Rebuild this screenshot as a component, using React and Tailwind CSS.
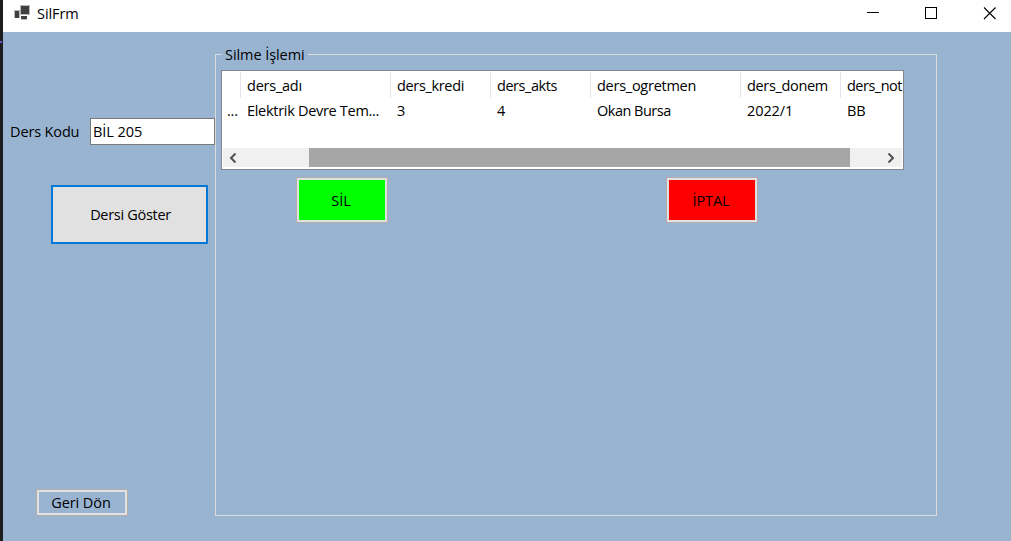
const columns = [
  { title: "", value: "...", box: "w-[18px] pl-1", valueFit: "tracking-[-0.2px]" },
  { title: "ders_adı", value: "Elektrik Devre Tem...", box: "w-[150px] pl-1.5", titleFit: "tracking-[-0.24px]", valueFit: "tracking-[-0.3px]" },
  { title: "ders_kredi", value: "3", box: "w-[100px] pl-1.5", titleFit: "tracking-[-0.34px]" },
  { title: "ders_akts", value: "4", box: "w-[100px] pl-1.5", titleFit: "tracking-[-0.45px]" },
  { title: "ders_ogretmen", value: "Okan Bursa", box: "w-[150px] pl-1.5", titleFit: "tracking-[-0.26px]", valueFit: "tracking-[-0.5px]" },
  { title: "ders_donem", value: "2022/1", box: "w-[100px] pl-1.5", titleFit: "tracking-[-0.34px]", valueFit: "tracking-[-0.1px]" },
  { title: "ders_not", value: "BB", box: "w-[61px] pl-1.5", titleFit: "tracking-[-0.5px]" },
];

function TitleBar() {
  return (
    <header className="flex h-8 shrink-0 items-start bg-white">
      <svg className="mt-[5px] ml-[11px] h-[15px] w-4" viewBox="0 0 16 15" shapeRendering="crispEdges">
        <path d="M0 5h6v8H0zM6 0h10v10H6zM7 11h6v4H7z" fill="#b8b8b8" />
        <path d="M1 6h4v7H1zM7 1h8v8H7zM7 11h6v3H7z" fill="#404040" />
      </svg>
      <span className="mt-1 ml-[7px]">SilFrm</span>
      <svg className="mt-[7px] ml-auto h-[13px] w-[131px] shrink-0" viewBox="0 0 131 13" fill="none" stroke="#000">
        <path d="M0 5.5h12M58.500.5h11v11h-11z" shapeRendering="crispEdges" />
        <path d="M117 .5l11.500 11.500M128.500.5L117 12" strokeWidth="1.1" />
      </svg>
      <span className="w-[13px]" />
    </header>
  );
}

function LessonList() {
  return (
    <div className="ml-[5px] flex h-[100px] w-[683px] flex-col border border-[#828790] bg-white p-px">
      <div className="flex h-[26px]">
        {columns.map((c) => (
          <div key={c.title} className={`${c.box} ${c.titleFit || ""} shrink-0 border-r border-[#e5e5e5] leading-[27px] last:border-r-0`}>{c.title}</div>
        ))}
      </div>
      <div className="flex h-[50px]">
        {columns.map((c) => (
          <div key={c.title} className={`${c.box} ${c.valueFit || ""} shrink-0 leading-[25px]`}>{c.value}</div>
        ))}
      </div>
      <div className="flex h-[19px] items-center bg-[#f0f0f0]">
        <svg className="ml-1.5 h-2.5 w-2" viewBox="0 0 8 10" fill="none" stroke="#505050" strokeWidth="2"><path d="M6.500.5L2 5l4.500 4.500" /></svg>
        <div className="ml-[72px] h-full w-[541px] bg-[#a6a6a6]" />
        <svg className="ml-[37px] h-2.5 w-2" viewBox="0 0 8 10" fill="none" stroke="#505050" strokeWidth="2"><path d="M1.500.5L6 5l-4.500 4.500" /></svg>
      </div>
    </div>
  );
}

export default function App() {
  return (
    <div className="flex h-[541px] w-[1011px] overflow-hidden bg-[#1c1c1f] font-['Open_Sans','Noto_Sans',sans-serif] text-[14.5px] leading-5 tracking-[-0.07px] whitespace-nowrap text-black">
      <div className="w-[3px] shrink-0 pt-[41px]"><div className="h-0.5 w-0.5 bg-[#6b5bd0]" /></div>
      <div className="flex w-[1008px] flex-col">
        <TitleBar />
        <main className="flex grow bg-[#99b4d1]">
          <section className="flex w-[212px] flex-col items-start">
            <label className="mt-[86px] flex items-center">
              <span className="ml-[7px] w-20 pt-px tracking-[-0.14px]">Ders Kodu</span>
              <span className="h-[27px] w-[125px] border border-[#7a7a7a] bg-white pl-0.5 leading-[25px]">BİL 205</span>
            </label>
            <button className="mt-10 ml-12 h-[59px] w-[157px] border-2 border-[#0078d7] bg-[#e1e1e1] pt-px pl-0.5 tracking-[-0.3px]">Dersi Göster</button>
            <button className="mt-[246px] ml-[34px] h-[25px] w-[90px] border-2 border-[#e1e1e1] pr-0.5 leading-[21px] ring-1 ring-[#b0adab]">Geri Dön</button>
          </section>
          <section className="mt-[13px] h-[471px] w-[722px]">
            <div className="flex h-[10px] items-end">
              <div className="h-px w-[7px] bg-[#dcdcdc]" />
              <div className="h-5 w-[86px] translate-y-2.5 pl-[3px]">Silme İşlemi</div>
              <div className="h-px grow bg-[#dcdcdc]" />
            </div>
            <div className="h-[461px] border-x border-b border-[#dcdcdc] pt-[15px]">
              <LessonList />
              <div className="mt-2 flex gap-[280px] pl-[81px]">
                <button className="h-11 w-[90px] border-2 border-[#e1e1e1] bg-[#00ff00] pt-px pr-0.5 ring-1 ring-[#b0adab]">SİL</button>
                <button className="h-11 w-[90px] border-2 border-[#e1e1e1] bg-[#ff0000] pt-px pr-0.5 ring-1 ring-[#b0adab]">İPTAL</button>
              </div>
            </div>
          </section>
        </main>
      </div>
    </div>
  );
}
